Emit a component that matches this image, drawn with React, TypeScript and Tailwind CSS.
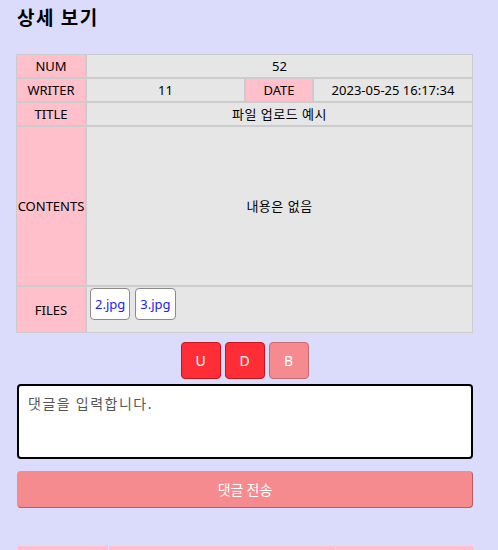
import React from "react";

const label = "bg-[#ffc0cb] border border-[#cccccc] text-center p-0";
const value = "bg-[#e6e6e6] border border-[#cccccc] text-center p-0";

const App = () => {
    const files = ["2.jpg", "3.jpg"];

    return (
        <div
            className="min-h-[550px] bg-[#dbdcfc] text-black"
            style={{ fontFamily: '"Noto Sans", "Noto Sans CJK KR", sans-serif' }}
        >
            <div className="ml-4 w-[457px] pt-[5px]">
                <h3 className="text-[19px] font-bold leading-[24px] pl-[1px] tracking-[1.5px]" style={{ fontFamily: '"Noto Sans CJK KR", sans-serif' }}>
                    상세 보기
                </h3>

                <table className="mt-[25px] w-full table-fixed border-separate border-spacing-0 text-[13px] leading-[18px]">
                    <colgroup>
                        <col className="w-[70px]" />
                        <col className="w-[159px]" />
                        <col className="w-[68px]" />
                        <col className="w-[160px]" />
                    </colgroup>
                    <tbody>
                        <tr>
                            <td className={`${label} h-[24px]`}>NUM</td>
                            <td className={`${value} h-[24px]`} colSpan={3}>52</td>
                        </tr>
                        <tr>
                            <td className={`${label} h-[24px]`}>WRITER</td>
                            <td className={`${value} h-[24px]`}>11</td>
                            <td className={`${label} h-[24px]`}>DATE</td>
                            <td className={`${value} h-[24px]`}>2023-05-25 16:17:34</td>
                        </tr>
                        <tr>
                            <td className={`${label} h-[24px]`}>TITLE</td>
                            <td className={`${value} h-[24px] tracking-[0.5px]`} colSpan={3}>파일 업로드 예시</td>
                        </tr>
                        <tr>
                            <td className={`${label} h-[160px]`}>CONTENTS</td>
                            <td className={`${value} h-[160px] tracking-[0.5px]`} colSpan={3}>내용은 없음</td>
                        </tr>
                        <tr>
                            <td className={`${label} h-[47px]`}>FILES</td>
                            <td className={`${value} h-[47px] align-top text-left`} colSpan={3}>
                                <div className="flex gap-[5px] pl-[3px] pt-[1px]">
                                    {files.map((f) => (
                                        <button
                                            key={f}
                                            className="h-[32px] px-[4px] bg-white border border-[#8a8a8a] rounded-[4px] text-[#1a1aff] text-[13px]"
                                        >
                                            {f}
                                        </button>
                                    ))}
                                </div>
                            </td>
                        </tr>
                    </tbody>
                </table>

                <div className="flex justify-center gap-[4px] mt-[9px]">
                    <button className="w-[40px] h-[37px] rounded-[4px] bg-[#ff2d35] border border-[#c8141c] text-white text-[14px]">U</button>
                    <button className="w-[40px] h-[37px] rounded-[4px] bg-[#ff2d35] border border-[#c8141c] text-white text-[14px]">D</button>
                    <button className="w-[40px] h-[37px] rounded-[4px] bg-[#f58b8f] border border-[#c96a6e] text-white text-[14px]">B</button>
                </div>

                <textarea
                    className="block mt-[5px] ml-[1px] w-[456px] h-[75px] bg-white border-2 border-black rounded-[4px] px-[9px] py-[7px] text-[14px] tracking-[1.5px] resize-none placeholder:text-[#555555] outline-none"
                    style={{ fontFamily: '"Noto Sans CJK KR", monospace' }}
                    placeholder="댓글을 입력합니다."
                />

                <button
                    className="block mt-[12px] ml-[1px] w-[456px] h-[37px] rounded-[4px] bg-[#f68b8f] border border-[#f68b8f] border-b-[#c0585c] border-r-[#c0585c] text-white text-[14px]"
                    style={{ fontFamily: '"Noto Sans CJK KR", sans-serif' }}
                >
                    댓글 전송
                </button>

                <table className="mt-[38px] ml-[1px] w-[456px] table-fixed border-separate border-spacing-x-[1px] border-spacing-y-0">
                    <colgroup>
                        <col className="w-[90px]" />
                        <col className="w-[226px]" />
                        <col className="w-[137px]" />
                    </colgroup>
                    <tbody>
                        <tr>
                            <td className="bg-[#ffc0cb] h-[30px]"></td>
                            <td className="bg-[#ffc0cb] h-[30px]"></td>
                            <td className="bg-[#ffc0cb] h-[30px]"></td>
                        </tr>
                    </tbody>
                </table>
            </div>
        </div>
    );
};

export default App;
